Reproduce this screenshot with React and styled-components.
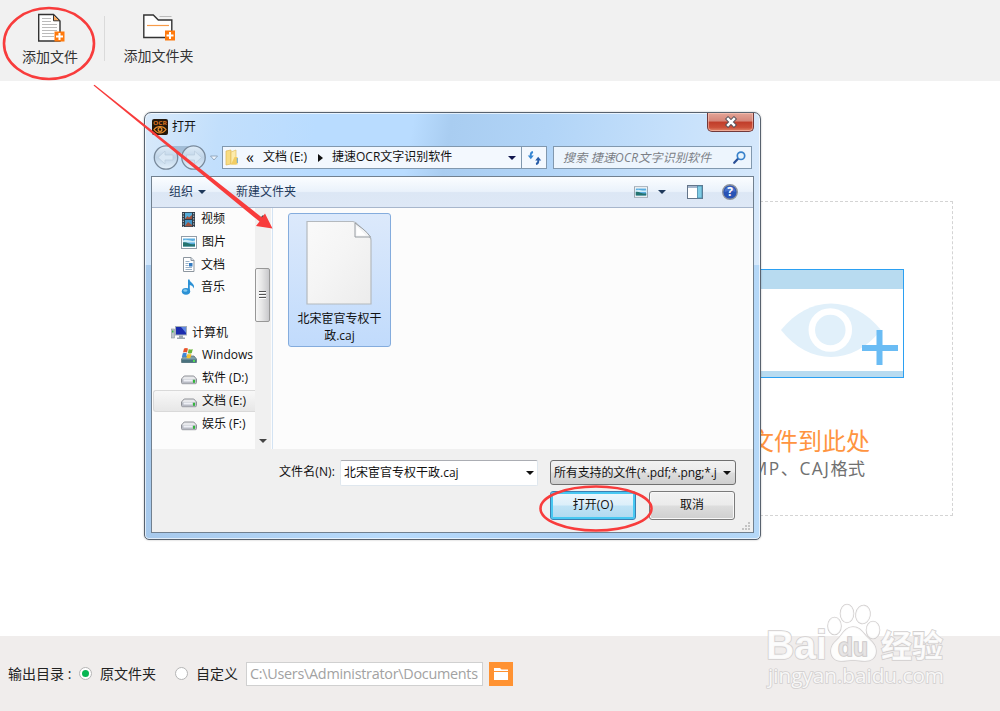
import React from 'react'
import styled, { createGlobalStyle } from 'styled-components';

const GlobalStyle = createGlobalStyle`
    * {
        box-sizing: border-box;
    }
    body {
        margin: 0;
        overflow: hidden;
        font-family: 'Open Sans', 'Noto Sans CJK SC', sans-serif;
        color: #111;
    }
    svg {
        display: block;
        flex: none;
    }
`;

const Page = styled.div`
    position: relative;
    display: flex;
    flex-direction: column;
    width: 1000px;
    height: 711px;
    overflow: hidden;
    background: #fff;
`;

/* ---------- main window ---------- */

const TopBar = styled.header`
    display: flex;
    height: 81px;
    background: #f1f1f1;
    padding: 10px 0 0 9px;
`;

const TopButton = styled.div`
    display: flex;
    flex-direction: column;
    align-items: center;
    width: ${(p) => p.$width}px;
    font-size: 14px;
    line-height: 20px;
    color: #333;
    svg {
        margin-bottom: ${(p) => p.$gap}px;
    }
`;

const TopDivider = styled.div`
    width: 1px;
    height: 45px;
    margin: 6px 8px 0 13px;
    background: #dadada;
`;

const Main = styled.main`
    flex: 1;
    padding: 120px 47px 120px 400px;
`;

const DropArea = styled.div`
    display: flex;
    flex-direction: column;
    align-items: flex-end;
    height: 315px;
    padding-top: 67px;
    border: 1px dashed #d4d4d4;
`;

const DropTitle = styled.div`
    margin: 46px 82px 0 0;
    font-size: 24px;
    line-height: 34px;
    font-weight: 400;
    color: #ff9440;
`;

const DropHint = styled.div`
    margin-right: 87px;
    font-size: 17.3px;
    line-height: 22px;
    color: #707070;
    span {
        letter-spacing: 1.5px;
    }
`;

const BottomBar = styled.footer`
    display: flex;
    align-items: center;
    height: 75px;
    padding-left: 8px;
    background: #f0edec;
    font-size: 14px;
    color: #222;
`;

const DirLabel = styled.span`
    width: 71px;
    padding-bottom: 2px;
    white-space: pre;
`;

const Radio = styled.span`
    display: flex;
    align-items: center;
    justify-content: center;
    width: 13px;
    height: 13px;
    margin-right: 8px;
    border: 1px solid #b5b5b5;
    border-radius: 50%;
    background: #fff;
    &::after {
        content: '';
        width: 7px;
        height: 7px;
        border-radius: 50%;
        background: ${(p) => (p.$checked ? '#08b653' : 'transparent')};
    }
`;

const RadioText = styled.span`
    width: ${(p) => p.$width}px;
    padding-bottom: 2px;
`;

const PathBox = styled.div`
    width: 237px;
    height: 24px;
    padding: 0 3px;
    border: 1px solid #d0d0d0;
    background: #fff;
    color: #a2a2a2;
    span {
        display: block;
        overflow: hidden;
        font-size: 14.4px;
        letter-spacing: -0.28px;
        line-height: 22px;
        white-space: nowrap;
    }
`;

const BrowseButton = styled.div`
    display: flex;
    align-items: center;
    justify-content: center;
    width: 24px;
    height: 24px;
    margin-left: 6px;
    background: #ff9232;
`;

/* ---------- open dialog ---------- */

const Dialog = styled.section`
    position: absolute;
    left: 144px;
    top: 112px;
    display: flex;
    flex-direction: column;
    width: 617px;
    height: 428px;
    padding: 0 6px 6px;
    border: 1px solid #58626e;
    border-radius: 7px 7px 5px 5px;
    box-shadow: inset 0 0 0 1px rgba(255, 255, 255, 0.65), 0 0 2px rgba(0, 0, 0, 0.3);
    background:
        linear-gradient(100deg, #d8e9fa 0%, #c2dffc 12%, #b9dcff 27%, #b9dcff 42%, #a9cdf1 48%, #b1d4f7 63%, #c5e0fb 82%, #d8e9fb 100%) top / 100% 152px no-repeat,
        linear-gradient(90deg, #a7c9ec, #b8dbfc 40%, #a9cef3 70%, #b5d8f8);
    font-size: 12px;
    line-height: 16px;
`;

const TitleBar = styled.div`
    display: flex;
    height: 32px;
    padding-left: 1px;
`;

const TitleText = styled.span`
    flex: 1;
    padding: 6px 0 0 4px;
`;

const AppIcon = styled.div`
    margin-top: 6px;
`;

const CloseButton = styled.div`
    display: flex;
    align-items: center;
    justify-content: center;
    width: 47px;
    height: 19px;
    border: 1px solid #71393a;
    border-top: 0;
    border-radius: 0 0 5px 5px;
    box-shadow: inset 0 0 0 1px rgba(255, 210, 195, 0.5);
    background: linear-gradient(#e3a497 0%, #d58578 45%, #c03d2a 50%, #cb5039 80%, #e2886d 100%);
`;

const AddressRow = styled.div`
    display: flex;
    height: 31px;
    padding: 0 2px;
`;

const NavButtons = styled.div`
    width: 69px;
`;

const AddressBox = styled.div`
    display: flex;
    align-items: center;
    width: 325px;
    height: 23px;
    margin-top: 1px;
    padding-left: 2px;
    border: 1px solid #8198ae;
    background: #f3f8fe;
`;

const Crumb = styled.span`
    width: ${(p) => p.$width}px;
    padding: 0 0 1px ${(p) => p.$pad || 0}px;
    font-size: ${(p) => p.$size || 12}px;
    white-space: nowrap;
`;

const RefreshCell = styled.div`
    display: flex;
    align-items: center;
    justify-content: center;
    width: 25px;
    height: 21px;
    margin-left: auto;
    border-left: 1px solid #8198ae;
`;

const SearchBox = styled(AddressBox)`
    justify-content: space-between;
    width: 199px;
    margin-left: 6px;
    padding: 0 5px 0 9px;
    background: #edf5fd;
    font-style: italic;
    letter-spacing: 0.2px;
    color: #7b7f86;
`;

const Client = styled.div`
    display: flex;
    flex-direction: column;
    flex: 1;
    border: 1px solid #71808f;
    background: #f0f0f0;
`;

const CommandBar = styled.div`
    display: flex;
    align-items: center;
    height: 31px;
    padding: 0 15px 0 17px;
    border-bottom: 1px solid #a7b6cc;
    background: linear-gradient(#fbfdff 0%, #eaf2fb 48%, #dce7f5 52%, #dee8f6 100%);
    color: #1e395b;
`;

const CommandItem = styled.span`
    display: flex;
    align-items: center;
    width: ${(p) => p.$width}px;
    gap: 5px;
`;

const CommandIcons = styled.div`
    display: flex;
    align-items: center;
    margin-left: auto;
`;

const DropArrow = styled.span`
    display: flex;
    width: 39px;
    padding-left: 10px;
`;

const Triangle = styled.i`
    width: 0;
    height: 0;
    border: 4px solid transparent;
    border-top-color: ${(p) => p.$color || '#111'};
    border-bottom: 0;
`;

const Body = styled.div`
    display: flex;
    height: 241px;
    background: #fcfcfc;
`;

const Tree = styled.div`
    width: 103px;
    overflow: hidden;
`;

const TreeRow = styled.div`
    display: flex;
    align-items: center;
    height: 22.7px;
    margin-left: 1px;
    padding-left: ${(p) => (p.$root ? 17 : 27)}px;
    gap: 5px;
    border: 1px solid ${(p) => (p.$active ? '#d9d9d9' : 'transparent')};
    border-right: 0;
    border-radius: 3px 0 0 3px;
    background: ${(p) => (p.$active ? 'linear-gradient(#f8f8f8, #e7e7e7)' : 'none')};
    white-space: nowrap;
`;

const ScrollBar = styled.div`
    display: flex;
    flex-direction: column;
    align-items: center;
    width: 16px;
    padding: 7px 1px 6px 0;
    background: #f0f0f0;
`;

const ScrollUp = styled.i`
    border: 4px solid transparent;
    border-top: 0;
    border-bottom-color: #444;
`;

const Thumb = styled.div`
    display: flex;
    flex-direction: column;
    align-items: center;
    justify-content: center;
    gap: 1px;
    width: 15px;
    height: 54px;
    margin: 49px 0 auto;
    border: 1px solid #979797;
    border-radius: 2px;
    background: linear-gradient(90deg, #f7f7f7, #e6e6e6 45%, #c8c8cb);
    i {
        width: 7px;
        height: 2px;
        border-top: 1px solid #555;
        background: #fff;
    }
`;

const Files = styled.div`
    flex: 1;
    margin-left: 1px;
    padding: 5px 0 0 15px;
    border-left: 1px solid #d3e3f3;
`;

const FileTile = styled.div`
    display: flex;
    flex-direction: column;
    align-items: center;
    width: 103px;
    height: 134px;
    padding-top: 6px;
    border: 1px solid #84acdd;
    border-radius: 3px;
    background: linear-gradient(#dce9fb, #c1dbfc);
    line-height: 17px;
    text-align: center;
    span {
        width: 86px;
        margin-top: 4px;
    }
`;

const FormRow = styled.div`
    display: flex;
    align-items: center;
    height: 25px;
    margin-top: ${(p) => p.$top}px;
    padding-right: ${(p) => p.$right}px;
    justify-content: flex-end;
`;

const FieldLabel = styled.span`
    width: 61px;
    padding-bottom: 1px;
    letter-spacing: 0.1px;
    white-space: nowrap;
`;

const NameField = styled.div`
    display: flex;
    align-items: center;
    justify-content: space-between;
    width: 198px;
    height: 26px;
    padding: 0 3px;
    border: 1px solid #dfe7ee;
    border-top-color: #abadb3;
    border-radius: 2px;
    background: #fff;
`;

const TypeField = styled.div`
    display: flex;
    align-items: center;
    justify-content: space-between;
    width: 186px;
    height: 25px;
    margin-left: 12px;
    padding: 0 4px 0 3px;
    border: 1px solid #707070;
    border-radius: 3px;
    background: linear-gradient(#f2f2f2 0%, #ebebeb 48%, #dddddd 52%, #cfcfcf 100%);
    letter-spacing: -0.15px;
    white-space: nowrap;
`;

const PushButton = styled.div`
    display: flex;
    align-items: center;
    justify-content: center;
    width: 86px;
    height: 29px;
    margin-left: 13px;
    padding-bottom: 1px;
    border: 1px solid ${(p) => (p.$primary ? '#3c7fb1' : '#7b7b7b')};
    border-radius: 3px;
    box-shadow: inset 0 0 0 ${(p) => (p.$primary ? '2px #48c8f2' : '1px #f8f8f8')};
    background: ${(p) => (p.$primary
        ? 'linear-gradient(#eef7fc 0%, #dceffa 48%, #bfe3f6 52%, #b0d9ef 100%)'
        : 'linear-gradient(#f2f2f2 0%, #ebebeb 48%, #dddddd 52%, #cfcfcf 100%)')};
`;

const GripRow = styled.div`
    display: flex;
    justify-content: flex-end;
    margin-top: auto;
    padding: 0 2px 1px 0;
`;

/* arrows and circles drawn above everything */
const Marks = styled.svg`
    position: absolute;
    left: 0;
    top: 0;
`;

/* ---------- icons ---------- */

const PlusBadge = ({ x, y }) => (
    <g>
        <rect x={x} y={y} width="10" height="10" fill="#ff7a0d" />
        <path d={`M${x + 5} ${y + 1.5}v7M${x + 1.5} ${y + 5}h7`} stroke="#fff" strokeWidth="2" />
    </g>
)

const AddFileIcon = () => (
    <svg width="30" height="32" viewBox="0 0 30 32">
        <path d="M3.700 4.500H18.500L25 11v20H3.700z" fill="#fff" stroke="#333" strokeWidth="1.4" />
        <path d="M18.500 4.500v6.300h6.300z" fill="#f8a860" stroke="#333" />
        <path d="M7 8.500h9M7 11.500h9M7 14.500h15M7 17.500h15M7 20.500h15M7 23.500h12M7 26.500h12" stroke="#bbb" />
        <PlusBadge x={19.500} y={21.500} />
    </svg>
)

const AddFolderIcon = () => (
    <svg width="32" height="31" viewBox="0 0 32 31">
        <path d="M.8 27.500V5h9.500l5 5h13.500v17.500z" fill="#fff" stroke="#333" strokeWidth="1.4" />
        <path d="M16.500 6.500h12" stroke="#bbb" />
        <path d="M4 15.500h22" stroke="#f79b48" strokeWidth="1.2" />
        <PlusBadge x={22} y={20.500} />
    </svg>
)

const DropPicture = styled.svg`
    margin-right: 48px;
`;

const EyeWindow = () => (
    <DropPicture width="160" height="109" viewBox="0 0 160 109">
        <rect width="160" height="109" fill="#2ba0f2" />
        <rect x="1" y="1" width="158" height="107" fill="#fff" />
        <rect x="1" y="1" width="158" height="19" fill="#b8dbf0" />
        <rect x="1" y="102" width="158" height="6" fill="#b8dbf0" />
        <path d="M37 61C65 25.500 109 25.500 137 61C109 97 65 97 37 61z" fill="#e1f0fa" />
        <circle cx="86.300" cy="61" r="18.500" fill="#e1f0fa" stroke="#fff" strokeWidth="6.500" />
        <path d="M135.500 61v35M118 79h36" stroke="#6abcf4" strokeWidth="6" />
    </DropPicture>
)

const FolderGlyph = () => (
    <svg width="16" height="14" viewBox="0 0 16 14">
        <path d="M1 1h6l1.500 1.500H15V13H1z" fill="#fff" />
        <path d="M1 4.500h14" stroke="#ff9232" />
    </svg>
)

const OcrIcon = () => (
    <svg width="16" height="16" viewBox="0 0 16 16">
        <rect width="16" height="16" rx="2" fill="#25180c" />
        <text x="1" y="6" fontSize="6" fontWeight="bold" textLength="14" lengthAdjust="spacingAndGlyphs" fill="#db7421">OCR</text>
        <path d="M2 10.500C5 6.500 11 6.500 14 10.500C11 15 5 15 2 10.500z" fill="none" stroke="#ef912e" strokeWidth="1.2" />
        <circle cx="8" cy="10.500" r="1.900" fill="none" stroke="#ef912e" strokeWidth="1.200" />
    </svg>
)

const CloseGlyph = () => (
    <svg width="14" height="12" viewBox="0 0 14 12">
        <path d="M2.500 1.500l9 9M11.500 1.500l-9 9" stroke="#56525a" strokeWidth="4.400" />
        <path d="M3.200 2.200l7.600 7.600M10.800 2.200l-7.600 7.600" stroke="#fff" strokeWidth="2.500" />
    </svg>
)

const BackForward = () => (
    <svg width="66" height="26" viewBox="0 0 66 26">
        <defs>
            <linearGradient id="nav" x1="0" y1="0" x2="0" y2="1">
                <stop offset="0" stopColor="#e0edf8" />
                <stop offset=".5" stopColor="#bfd4e8" />
                <stop offset="1" stopColor="#e4f1fc" />
            </linearGradient>
        </defs>
        <path d="M12 1h29l-5 7H17z" fill="#a3bdd6" />
        <circle cx="13" cy="12.500" r="11.700" fill="url(#nav)" stroke="#78899b" strokeWidth="1.300" />
        <circle cx="40.500" cy="12.500" r="11.700" fill="url(#nav)" stroke="#78899b" strokeWidth="1.300" />
        <path d="M5 12.500l7-6.500v4h8v5h-8v4zM48.500 12.500l-7-6.500v4h-8v5h8v4z" fill="#d9e8f5" stroke="#b9cbdd" strokeWidth=".7" />
        <path d="M57.500 11h7L61 15z" fill="#eef6ff" stroke="#8499b0" strokeWidth=".8" />
    </svg>
)

const YellowFolder = () => (
    <svg width="14" height="17" viewBox="0 0 14 17">
        <path d="M1 2l5-1v14l-5 1z" fill="#f8dc82" stroke="#dfb957" strokeWidth=".7" />
        <path d="M6 3l5-2v14H6z" fill="#fdebaa" stroke="#e3bf62" strokeWidth=".7" />
        <path d="M9.500 8h3v7.500H6z" fill="#f3cd62" />
        <path d="M12.300 9v5" stroke="#6ca7cf" />
    </svg>
)

const RefreshIcon = () => (
    <svg width="15" height="14" viewBox="0 0 15 14">
        <path d="M6 1C3.500 1.500 3.500 3 3.700 5" fill="none" stroke="#3787d3" strokeWidth="1.800" />
        <path d="M.8 4.500h6L3.800 8.200z" fill="#3787d3" />
        <path d="M9 13c2.500-.5 2.500-2 2.300-4" fill="none" stroke="#285ca8" strokeWidth="1.800" />
        <path d="M8.200 9.500h6l-3-3.800z" fill="#285ca8" />
    </svg>
)

const SearchIcon = () => (
    <svg width="13" height="13" viewBox="0 0 13 13">
        <path d="M1.200 11.800l4-4.300" stroke="#2b4f96" strokeWidth="2.200" strokeLinecap="round" />
        <circle cx="8" cy="4.800" r="3.700" fill="#e8f5fe" stroke="#3982cb" strokeWidth="1.700" />
    </svg>
)

const PictureIcon = ({ w = 16, h = 13 }) => (
    <svg width={w} height={h} viewBox="0 0 16 13">
        <rect x=".5" y=".5" width="15" height="12" fill="#fff" stroke="#929da8" />
        <rect x="2" y="2.500" width="12" height="8" fill="#5aade0" />
        <path d="M2 4.500c4-2 7 1.500 12 0v2H2z" fill="#cdecf8" />
        <path d="M2 6.500c4-1 7 3 12 1.500v2.500H2z" fill="#24736f" />
    </svg>
)

const PaneIcon = () => (
    <svg width="16" height="14" viewBox="0 0 16 14">
        <rect x=".5" y=".5" width="15" height="13" fill="#fff" stroke="#64758a" />
        <path d="M1 2h10" stroke="#a5b6cc" strokeWidth="2" />
        <rect x="10.500" y="1" width="4.500" height="12" fill="#7fcce5" stroke="#4a89a8" strokeWidth=".8" />
    </svg>
)

const HelpIcon = () => (
    <svg width="16" height="16" viewBox="0 0 16 16">
        <circle cx="8" cy="8" r="7.300" fill="#2953b5" stroke="#8e949e" strokeWidth="1.400" />
        <path d="M2.500 8a5.500 5.500 0 0 1 11 0q-5-2-11 0z" fill="#5d86dc" opacity=".6" />
        <text x="8" y="12.300" fontSize="12" fontWeight="bold" fill="#fff" textAnchor="middle">?</text>
    </svg>
)

const VideoIcon = () => (
    <svg width="15" height="15" viewBox="0 0 15 15">
        <rect x="1" width="13" height="15" fill="#303d49" />
        <path d="M2.300 1v14M12.700 1v14" stroke="#c7d3dc" strokeDasharray="1.300 1.300" />
        <rect x="4" y=".8" width="7" height="6.200" fill="#56add9" />
        <rect x="4" y="8" width="7" height="6.200" fill="#4295c7" />
        <path d="M4 7l2.500-3L8 5.500 11 3v4zM4 14l3-4 4 3v1.200H4z" fill="#a2533d" />
    </svg>
)

const DocIcon = () => (
    <svg width="15" height="15" viewBox="0 0 15 15">
        <path d="M2.500.500h7.500l3 3v11H2.500z" fill="#fff" stroke="#8d969f" />
        <path d="M10 .5v3h3" fill="#dce3ea" stroke="#8d969f" />
        <path d="M4.500 4.500h4M4.500 6.500h3M4.500 8.500h3M4.500 10.500h6.500M4.500 12.500h6.500" stroke="#8ea9c2" strokeWidth=".9" />
        <rect x="8" y="6" width="3.500" height="3.500" fill="#327ac1" />
    </svg>
)

const MusicIcon = () => (
    <svg width="15" height="16" viewBox="0 0 15 16">
        <path d="M7 12V.500h1.500c.5 3.500 6 4 4.200 9-.5-2-2-3.200-3.900-3.500v6.500z" fill="#2c91d5" />
        <ellipse cx="5" cy="12.300" rx="4.200" ry="3.400" fill="#2c91d5" />
        <ellipse cx="4.300" cy="11.500" rx="2" ry="1.200" fill="#82c9ef" />
    </svg>
)

const ComputerIcon = () => (
    <svg width="16" height="15" viewBox="0 0 16 15">
        <rect x=".5" y="4" width="3" height="9" fill="#bdc5ca" stroke="#87939d" strokeWidth=".6" />
        <rect x="1" y="5.500" width="1.500" height="2" fill="#36b34a" />
        <rect x="4.500" y="1.500" width="11" height="8.500" fill="#1b2cae" stroke="#a3aeb9" />
        <path d="M10 2h5v6z" fill="#6188e1" />
        <path d="M8 10.500h4v2H8zM6 12.500h8v1.500H6z" fill="#9aa5af" />
    </svg>
)

const DriveIcon = () => (
    <svg width="16" height="14" viewBox="0 0 16 14">
        <path d="M3.200 5h9.600L15.500 8v3.500q0 1.200-1.200 1.200H1.700q-1.200 0-1.200-1.200V8z" fill="#e8e9ec" stroke="#85878d" strokeWidth=".9" />
        <path d="M1 8.300h14v3.200q0 .8-1 .8H2q-1 0-1-.8z" fill="#b9bcc5" />
        <path d="M2.500 9.500h9" stroke="#eef0f6" strokeWidth="2" />
        <rect x="12" y="8.800" width="2" height="3" fill="#32b63b" />
    </svg>
)

const WindowsDriveIcon = () => (
    <svg width="16" height="17" viewBox="0 0 16 17">
        <path d="M3 9h10l2.500 3v3.500H.5V12z" fill="#7fa0aa" stroke="#5a7179" strokeWidth=".8" />
        <path d="M1 12.500h14v3H1z" fill="#49727e" />
        <rect x="12" y="13" width="2" height="2" fill="#51db57" />
        <path d="M3 1.500q2-1.200 4 0L6 5.500q-2-1-4 0z" fill="#e9542b" />
        <path d="M7.800 2q2 1 4 0l-1 4q-2 1-4 0z" fill="#6cb43a" />
        <path d="M1.800 6.300q2-1 4 0l-1 4q-2-1-4 0z" fill="#3f87d5" />
        <path d="M6.500 6.800q2 1 4 0l-1 4q-2 1-4 0z" fill="#f7c22d" />
    </svg>
)

const PaperIcon = () => (
    <svg width="67" height="86" viewBox="0 0 67 86">
        <defs>
            <linearGradient id="paper" x1="0" y1="0" x2="1" y2="1">
                <stop offset="0" stopColor="#fafafa" />
                <stop offset=".45" stopColor="#f5f5f5" />
                <stop offset="1" stopColor="#ececec" />
            </linearGradient>
        </defs>
        <path d="M1 1.500h46Q50 2 52 5l11 11q2 2 2 4v64H1z" fill="url(#paper)" stroke="#b4b9be" strokeWidth="1.200" />
        <path d="M49 3v14h15.500Q61 12 57 9z" fill="#f2f3f4" stroke="#989da2" />
        <path d="M50.500 6v9.500H60z" fill="#fff" />
    </svg>
)

const GripIcon = () => (
    <svg width="10" height="10" viewBox="0 0 10 10" fill="#c4c4c4">
        <path d="M7 1h2v2H7zM4 4h2v2H4zM7 4h2v2H7zM1 7h2v2H1zM4 7h2v2H4zM7 7h2v2H7z" />
    </svg>
)

const treeItems = [
    { label: '视频', icon: <VideoIcon /> },
    { label: '图片', icon: <PictureIcon /> },
    { label: '文档', icon: <DocIcon /> },
    { label: '音乐', icon: <MusicIcon /> },
    { label: '' },
    { label: '计算机', icon: <ComputerIcon />, root: true },
    { label: 'Windows', icon: <WindowsDriveIcon /> },
    { label: '软件 (D:)', icon: <DriveIcon /> },
    { label: '文档 (E:)', icon: <DriveIcon />, active: true },
    { label: '娱乐 (F:)', icon: <DriveIcon /> },
];

const OpenDialog = () => (
    <Dialog>
        <TitleBar>
            <AppIcon><OcrIcon /></AppIcon>
            <TitleText>打开</TitleText>
            <CloseButton><CloseGlyph /></CloseButton>
        </TitleBar>
        <AddressRow>
            <NavButtons><BackForward /></NavButtons>
            <AddressBox>
                <YellowFolder />
                <Crumb $width={24} $pad={7} $size={16}>«</Crumb>
                <Crumb $width={55}>文档 (E:)</Crumb>
                <svg width="5" height="8"><path d="M0 0l5 4-5 4z" fill="#111" /></svg>
                <Crumb $width={185} $pad={9}>捷速OCR文字识别软件</Crumb>
                <Triangle $color="#11164d" />
                <RefreshCell><RefreshIcon /></RefreshCell>
            </AddressBox>
            <SearchBox>
                <span>搜索 捷速OCR文字识别软件</span>
                <SearchIcon />
            </SearchBox>
        </AddressRow>
        <Client>
            <CommandBar>
                <CommandItem $width={67}>组织 <Triangle $color="#1e395b" /></CommandItem>
                <CommandItem>新建文件夹</CommandItem>
                <CommandIcons>
                    <PictureIcon w={14} h={12} />
                    <DropArrow><Triangle $color="#1e395b" /></DropArrow>
                    <CommandItem $width={35}><PaneIcon /></CommandItem>
                    <HelpIcon />
                </CommandIcons>
            </CommandBar>
            <Body>
                <Tree>
                    {treeItems.map((item, i) => (
                        <TreeRow key={i} $root={item.root} $active={item.active}>
                            {item.icon}
                            {item.label}
                        </TreeRow>
                    ))}
                </Tree>
                <ScrollBar>
                    <ScrollUp />
                    <Thumb><i /><i /><i /></Thumb>
                    <Triangle $color="#444" />
                </ScrollBar>
                <Files>
                    <FileTile>
                        <PaperIcon />
                        <span>北宋宦官专权干政.caj</span>
                    </FileTile>
                </Files>
            </Body>
            <FormRow $top={11} $right={17}>
                <FieldLabel>文件名(N):</FieldLabel>
                <NameField>北宋宦官专权干政.caj<Triangle /></NameField>
                <TypeField>所有支持的文件(*.pdf;*.png;*.j<Triangle /></TypeField>
            </FormRow>
            <FormRow $top={8} $right={18}>
                <PushButton $primary>打开(O)</PushButton>
                <PushButton>取消</PushButton>
            </FormRow>
            <GripRow><GripIcon /></GripRow>
        </Client>
    </Dialog>
)

const Annotations = () => (
    <Marks width="1000" height="711">
        <g fill="none" stroke="#f83c3c" strokeWidth="2.600">
            <ellipse cx="49" cy="43.500" rx="45" ry="35.500" />
            <ellipse cx="596" cy="508.500" rx="55.500" ry="22" />
        </g>
        <path d="M93.500 85.500L94.500 84.800L262 217.500L265 213.500L272.500 228.500L256 226L259.500 221.500z" fill="#f83c3c" />
    </Marks>
)

const Watermark = () => (
    <Marks width="1000" height="711">
        <g fill="#fff" fillOpacity=".85" stroke="#d2cfcf" strokeWidth="1.600" paintOrder="stroke" fontFamily="Liberation Sans, Noto Sans CJK SC, sans-serif" fontWeight="bold">
            <ellipse cx="834.500" cy="626" rx="6.500" ry="8.500" />
            <ellipse cx="847" cy="613.500" rx="6.500" ry="9" />
            <ellipse cx="863" cy="614.500" rx="7" ry="9" transform="rotate(10 863 614.5)" />
            <ellipse cx="873" cy="630" rx="6.500" ry="8.500" />
            <path d="M853 627c7 0 10 6 14 10 5 5 9 8 9 14 0 7-5 10-11 10-5 0-8-1-12-1s-7 1-12 1c-6 0-10-4-10-10s4-9 8-13c4-5 7-11 14-11z" />
            <text x="766" y="659" fontSize="40" textLength="61" lengthAdjust="spacingAndGlyphs">Bai</text>
            <text x="838" y="656" fontSize="26" textLength="30" lengthAdjust="spacingAndGlyphs" fill="#e4e2e2" stroke="#cbc8c8">du</text>
            <text x="881" y="657" fontSize="31" textLength="62">经验</text>
            <text x="768" y="683" fontSize="20.500" textLength="176" fontWeight="normal" fontFamily="Open Sans, sans-serif" lengthAdjust="spacingAndGlyphs">jingyan.baidu.com</text>
        </g>
    </Marks>
)

export default function App() {
    return (
    <Page>
        <GlobalStyle />
        <TopBar>
            <TopButton $width={82} $gap={5}>
                <AddFileIcon />
                添加文件
            </TopButton>
            <TopDivider />
            <TopButton $width={91} $gap={5}>
                <AddFolderIcon />
                添加文件夹
            </TopButton>
        </TopBar>
        <Main>
            <DropArea>
                <EyeWindow />
                <DropTitle>文件到此处</DropTitle>
                <DropHint><span>MP、CAJ</span>格式</DropHint>
            </DropArea>
        </Main>
        <BottomBar>
            <DirLabel>输出目录 :</DirLabel>
            <Radio $checked />
            <RadioText $width={75}>原文件夹</RadioText>
            <Radio />
            <RadioText $width={50}>自定义</RadioText>
            <PathBox><span>C:\Users\Administrator\Documents</span></PathBox>
            <BrowseButton><FolderGlyph /></BrowseButton>
        </BottomBar>
        <OpenDialog />
        <Annotations />
        <Watermark />
    </Page>
    )
}
